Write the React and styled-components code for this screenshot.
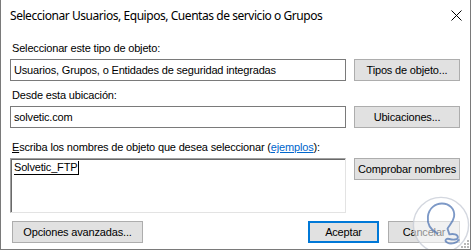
import React from 'react';
import styled, { createGlobalStyle } from 'styled-components';

const GlobalStyle = createGlobalStyle`
  html, body {
    margin: 0;
    padding: 0;
    background: #ffffff;
  }
  body {
    font-family: "Liberation Sans", Arial, sans-serif;
    font-size: 11px;
    letter-spacing: -0.17px;
    color: #000000;
  }
`;

const App = () => {
  return (
    <>
      <GlobalStyle />
      <Window>
        <TitleBar>
          <Title>Seleccionar Usuarios, Equipos, Cuentas de servicio o Grupos</Title>
          <CloseButton aria-label="Cerrar">
            <svg width="11" height="11" viewBox="0 0 11 11">
              <path d="M0.5 0.5 L10.5 10.5 M10.5 0.5 L0.5 10.5" stroke="#000" strokeWidth="1" fill="none" />
            </svg>
          </CloseButton>
        </TitleBar>

        <Body>
          <Label $top={10}>Seleccionar este tipo de objeto:</Label>
          <Row>
            <TextBox>Usuarios, Grupos, o Entidades de seguridad integradas</TextBox>
            <Button>Tipos de objeto...</Button>
          </Row>

          <Label $top={8}>Desde esta ubicación:</Label>
          <Row>
            <TextBox>solvetic.com</TextBox>
            <Button>Ubicaciones...</Button>
          </Row>

          <Label $top={13}>
            <u>E</u>scriba los nombres de objeto que desea seleccionar (<Link>ejemplos</Link>):
          </Label>
          <Row>
            <NamesBox>
              <Resolved>Solvetic_FTP</Resolved>
            </NamesBox>
            <Button>Comprobar nombres</Button>
          </Row>

          <Footer>
            <Button $width={131}>Opciones avanzadas...</Button>
            <FooterRight>
              <Button $width={71} $default>Aceptar</Button>
              <Button $width={72}>Cancelar</Button>
            </FooterRight>
          </Footer>
        </Body>

        <Watermark width="58" height="58" viewBox="0 0 62 62">
          <circle cx="31" cy="31" r="29.5" fill="rgba(255,255,255,0.55)" stroke="rgba(200,205,215,0.8)" strokeWidth="1.5" />
          <path
            d="M27 40 C20 36 16 30 17 22 C18 13 25 8 32 8 C40 8 46 14 45 22 C44 28 40 31 38 35 L40 41
               C44 40 49 41 49 44 C49 47 44 47 40 46 C36 45 34 48 38 50 C42 52 48 50 50 47"
            fill="none"
            stroke="rgba(70,110,175,0.7)"
            strokeWidth="2"
            strokeLinecap="round"
            strokeLinejoin="round"
          />
        </Watermark>
        <Grip width="9" height="9" viewBox="0 0 9 9">
          <rect x="7" y="1" width="2" height="2" fill="#b8b8b8" />
          <rect x="4" y="4" width="2" height="2" fill="#b8b8b8" />
          <rect x="7" y="4" width="2" height="2" fill="#b8b8b8" />
          <rect x="1" y="7" width="2" height="2" fill="#b8b8b8" />
          <rect x="4" y="7" width="2" height="2" fill="#b8b8b8" />
          <rect x="7" y="7" width="2" height="2" fill="#b8b8b8" />
        </Grip>
      </Window>
    </>
  );
};

const Window = styled.div`
  position: relative;
  width: 469px;
  height: 249px;
  border: 1px solid #7a7a7a;
  border-top: none;
  background: #ffffff;
  overflow: hidden;
`;

const TitleBar = styled.div`
  height: 32px;
  display: flex;
  align-items: center;
  justify-content: space-between;
  padding-left: 9px;
`;

const Title = styled.div`
  font-family: "Noto Sans", "Open Sans", sans-serif;
  font-size: 12px;
  letter-spacing: -0.45px;
  color: #000000;
  margin-top: -1px;
`;

const CloseButton = styled.div`
  width: 28px;
  height: 30px;
  display: flex;
  align-items: center;
  justify-content: center;
  margin-right: 0;
  margin-top: -2px;
`;

const Body = styled.div`
  padding: 0 10px 0 9px;
  display: flex;
  flex-direction: column;
`;

const Label = styled.div`
  height: 13px;
  line-height: 13px;
  margin-top: ${(p) => p.$top}px;
  margin-bottom: 4px;
  padding-left: 2px;
  white-space: nowrap;
`;

const Link = styled.span`
  color: #0066cc;
  text-decoration: underline;
`;

const Row = styled.div`
  display: flex;
  align-items: flex-start;
  gap: 8px;
`;

const TextBox = styled.div`
  box-sizing: border-box;
  width: 337px;
  height: 22px;
  border: 1px solid #7a7a7a;
  background: #ffffff;
  line-height: 20px;
  padding-left: 3px;
  white-space: nowrap;
  overflow: hidden;
`;

const NamesBox = styled.div`
  box-sizing: border-box;
  width: 337px;
  height: 55px;
  border-top: 1px solid #a0a0a0;
  border-left: 1px solid #a0a0a0;
  border-right: 1px solid #e3e3e3;
  border-bottom: 1px solid #e3e3e3;
  box-shadow: inset 1px 1px 0 #696969;
  background: #ffffff;
  padding: 2px 0 0 3px;
`;

const Resolved = styled.span`
  display: inline-block;
  line-height: 13px;
  border-bottom: 1px solid #000000;
  border-right: 1px solid #000000;
  padding-right: 1px;
`;

const Button = styled.div`
  box-sizing: border-box;
  width: ${(p) => p.$width || 106}px;
  height: 22px;
  display: flex;
  align-items: center;
  justify-content: center;
  background: #e1e1e1;
  border: ${(p) => (p.$default ? '2px solid #0078d7' : '1px solid #adadad')};
  white-space: nowrap;
  flex-shrink: 0;
`;

const Footer = styled.div`
  margin-top: 8px;
  display: flex;
  justify-content: space-between;
  align-items: center;
  padding-left: 2px;
`;

const FooterRight = styled.div`
  display: flex;
  gap: 9px;
`;

const Watermark = styled.svg`
  position: absolute;
  left: 411px;
  top: 196px;
`;

const Grip = styled.svg`
  position: absolute;
  right: 1px;
  bottom: 1px;
`;

export default App;
